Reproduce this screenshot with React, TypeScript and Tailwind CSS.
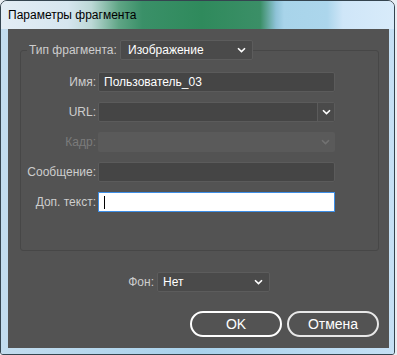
import React from 'react';

const Chevron: React.FC<{ className?: string }> = ({ className }) => (
  <svg width="9" height="6" viewBox="0 0 9 6" className={className} fill="none">
    <path d="M1 1.2 L4.5 4.6 L8 1.2" stroke="currentColor" strokeWidth="1.6" />
  </svg>
);

const TextRow: React.FC<{ label: string; children: React.ReactNode; dim?: boolean }> = ({ label, children, dim }) => (
  <div className="flex items-center gap-[2px] h-[20px]">
    <span className={`w-[75px] text-right ${dim ? 'text-[#7b7b7b]' : 'text-[#cdcdcd]'}`}>{label}</span>
    {children}
  </div>
);

const App: React.FC = () => {
  return (
    <div className="w-[397px] h-[355px] bg-[#e9eef3] text-[12px] font-['Liberation_Sans',Arial,sans-serif]">
      <div className="w-[395px] h-[355px] rounded-t-[7px] rounded-b-[3px] border border-[#34444f] overflow-hidden flex flex-col">
        {/* title bar */}
        <div className="h-[28px] shrink-0 flex items-center pl-[7px] text-black bg-[linear-gradient(to_right,#e3edf5_0%,#d6e6ef_17%,#bcd8d6_23%,#5fa585_30%,#3a9068_36%,#2f8a5c_51%,#3b8f67_66%,#8fc3d8_70%,#a8d4ea_72%,#acd6ec_83%,#cfe6f8_87%,#d8ebfa_100%)]">
          Параметры фрагмента
        </div>

        {/* frame */}
        <div className="flex-1 flex pl-[7px] pr-[5px] pb-[6px] bg-[linear-gradient(to_right,#c2dcee_0%,#a9d2ec_50%,#c5e0f5_100%)]">
          <div className="flex-1 flex flex-col bg-[#535353] pl-[12px] pr-[10px] pt-[11px]">
            <fieldset className="h-[211px] border border-[#474747] rounded-[3px] px-0 pb-0 pt-[12px] m-0">
              <legend className="ml-[6px] pl-[2px] flex items-center h-[20px]">
                <span className="w-[91px] text-[#cdcdcd]">Тип фрагмента:</span>
                <div className="w-[133px] h-[20px] flex items-center justify-between pl-[7px] pr-[6px] bg-[#4a4a4a] border border-[#5c5c5c] rounded-[2px] text-white">
                  <span>Изображение</span>
                  <Chevron className="text-white" />
                </div>
              </legend>

              <div className="flex flex-col gap-[10px]">
                <TextRow label="Имя:">
                  <div className="w-[237px] h-[20px] flex items-center pl-[5px] bg-[#454545] border border-[#5b5b5b] rounded-[2px] text-white">
                    Пользователь_03
                  </div>
                </TextRow>

                <TextRow label="URL:">
                  <div className="w-[237px] h-[20px] flex bg-[#454545] border border-[#5b5b5b] rounded-[2px]">
                    <div className="flex-1" />
                    <div className="w-[17px] flex items-center justify-center border-l border-[#5b5b5b] bg-[#4a4a4a]">
                      <Chevron className="text-white" />
                    </div>
                  </div>
                </TextRow>

                <TextRow label="Кадр:" dim>
                  <div className="w-[237px] h-[20px] flex items-center justify-end pr-[5px] bg-[#5a5a5a] rounded-[2px]">
                    <Chevron className="text-[#727272]" />
                  </div>
                </TextRow>

                <TextRow label="Сообщение:">
                  <div className="w-[237px] h-[20px] bg-[#454545] border border-[#5b5b5b] rounded-[2px]" />
                </TextRow>

                <TextRow label="Доп. текст:">
                  <div className="w-[237px] h-[20px] flex items-center pl-[5px] bg-white border border-[#3d8ee6]">
                    <span className="w-[1px] h-[13px] bg-black" />
                  </div>
                </TextRow>
              </div>
            </fieldset>

            <div className="mt-[21px] flex items-center gap-[3px] h-[20px]">
              <span className="w-[134px] text-right text-[#cdcdcd]">Фон:</span>
              <div className="w-[113px] h-[20px] flex items-center justify-between pl-[5px] pr-[6px] bg-[#4a4a4a] border border-[#5c5c5c] rounded-[2px] text-white">
                <span>Нет</span>
                <Chevron className="text-white" />
              </div>
            </div>

            <div className="mt-[19px] flex justify-end gap-[5px]">
              <button className="w-[92px] h-[26px] rounded-full border-2 border-white text-white text-[14px]">OK</button>
              <button className="w-[92px] h-[26px] rounded-full border-2 border-[#e8e8e8] text-white text-[14px]">Отмена</button>
            </div>
          </div>
        </div>
      </div>
    </div>
  );
};

export default App;
